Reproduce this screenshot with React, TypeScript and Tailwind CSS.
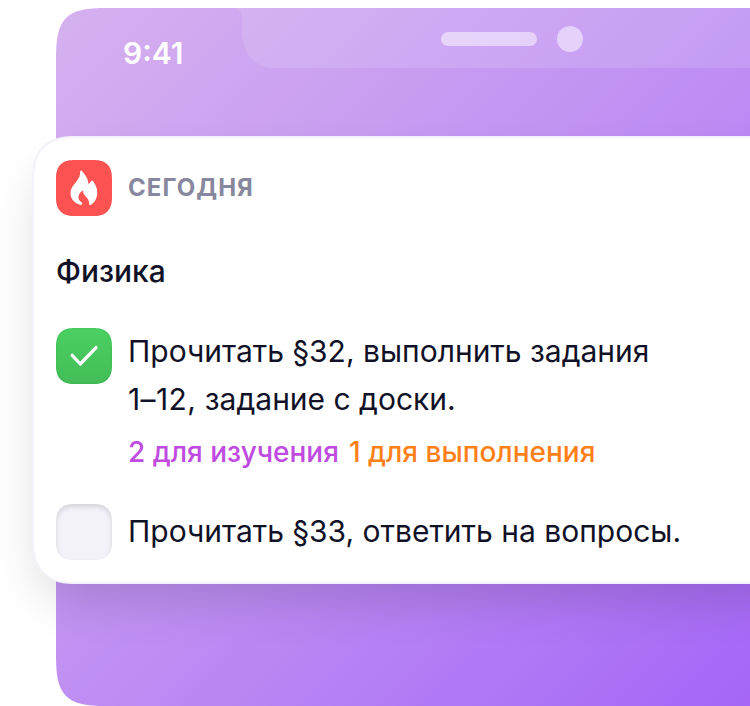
import React from "react";

function Notch() {
  return (
    <div className="absolute inset-x-0 top-0 h-[60px]">
      <svg className="absolute left-[178px] top-0" width="516" height="60" viewBox="0 0 516 60" fill="none">
        <path
          d="M0 0H516V60H37C17 58 8 42 8 22V14C8 5 5 1 0 0Z"
          fill="white"
          fillOpacity="0.12"
        />
      </svg>
      <div className="absolute left-[385px] top-6 h-3.5 w-24 rounded-full bg-white/50" />
      <div className="absolute left-[501px] top-[18px] size-[26px] rounded-full bg-white/50" />
    </div>
  );
}

function FlameBadge() {
  return (
    <div className="size-14 shrink-0 rounded-[19px] bg-[#fc5252] [corner-shape:superellipse(1.35)]">
      <svg width="56" height="56" viewBox="0 0 56 56" fill="white">
        <path d="M24.6 10.8C25.2 10.2 26 10.6 26.5 11.4C29.5 15.2 32.2 18.9 32.4 24C33.6 23.1 34.4 22.2 35.1 21.2C35.7 20.4 36.6 20.4 37.2 21.2C39.4 24.4 41.3 28.2 41.3 32.6C41.3 38.4 38.5 42.6 35.2 44.7C34.2 45.4 33.1 45 33.2 43.9C33.4 40.6 31.4 38.3 29.4 36.1C28 34.6 27 33.2 27.2 31.4C27.3 30.7 26.7 30.5 26.1 31C23.8 32.6 22.4 34.6 22.5 37.5C22.6 39.6 23.7 41.1 25.5 42.3C26.8 43.2 26.5 45 24.9 44.9C19 43.7 14.5 39.4 14.5 33.3C14.5 28.5 17.4 25.2 20 22C22.6 18.7 24.4 15.9 24.2 12C24.2 11.5 24.3 11.1 24.6 10.8Z" />
      </svg>
    </div>
  );
}

function Checkbox({ checked }: { checked?: boolean }) {
  if (!checked) {
    return (
      <div className="size-14 shrink-0 rounded-[19px] bg-[#f3f2f8] shadow-[inset_0_3px_5px_rgba(0,0,0,0.12),inset_0_0_2px_rgba(0,0,0,0.04)] [corner-shape:superellipse(1.35)]" />
    );
  }
  return (
    <div className="size-14 shrink-0 rounded-[19px] bg-linear-to-b from-[#4bd063] to-[#43bd58] shadow-[inset_0_0_3px_rgba(0,80,20,0.12)] [corner-shape:superellipse(1.35)]">
      <svg width="56" height="56" viewBox="0 0 56 56" fill="none">
        <path d="M16.2 27.3L24.3 36L40 19.6" stroke="white" strokeWidth="3.3" strokeLinecap="round" strokeLinejoin="round" />
      </svg>
    </div>
  );
}

export default function App() {
  return (
    <main className="relative h-[706px] w-[750px] overflow-hidden bg-white pt-2 pl-14 font-['Inter',sans-serif] text-[#111127]">
      <section className="relative h-[698px] w-[694px] bg-linear-[135deg] from-[#d6b1ef] via-[#bd8df3] via-54% to-[#a566f7] [clip-path:path('M694_0H50C31_0_18_2_10_10C2_18_0_31_0_50V648C0_667_2_680_10_688C18_696_31_698_50_698H694Z')]">
        <Notch />
        <time className="absolute left-[67px] top-[25px] text-[30px] leading-10 font-semibold text-white">9:41</time>
      </section>
      <article className="absolute left-8 top-[136px] flex h-[448px] w-[760px] flex-col rounded-[44px] border-2 border-[#f3f2f8] bg-white pt-[22px] pl-[22px] shadow-[0_24px_48px_-8px_rgba(0,0,0,0.15)] [corner-shape:superellipse(1.35)]">
        <header className="flex items-center gap-4">
          <FlameBadge />
          <span className="text-2xl font-bold tracking-[1.05px] text-[#87879d]">СЕГОДНЯ</span>
        </header>
        <h1 className="mt-[31px] text-[30px] leading-12 font-medium">Физика</h1>
        <div className="mt-[33px] flex gap-4">
          <Checkbox checked />
          <div className="-mt-px">
            <p className="text-[30px] leading-12 whitespace-nowrap">
              Прочитать §32, выполнить задания
              <br />
              <span className="tracking-[0.4px]">1–12,</span> задание с доски.
            </p>
            <div className="mt-[9px] flex gap-2.5 text-[28px] leading-10 font-medium whitespace-nowrap">
              <span className="text-[#c04be0]">2 для изучения</span>
              <span className="text-[#ff8019]">1 для выполнения</span>
            </div>
          </div>
        </div>
        <div className="mt-8 flex gap-4">
          <Checkbox />
          <p className="-mt-px text-[30px] leading-[56px] whitespace-nowrap">Прочитать §33, ответить на вопросы.</p>
        </div>
      </article>
    </main>
  );
}
